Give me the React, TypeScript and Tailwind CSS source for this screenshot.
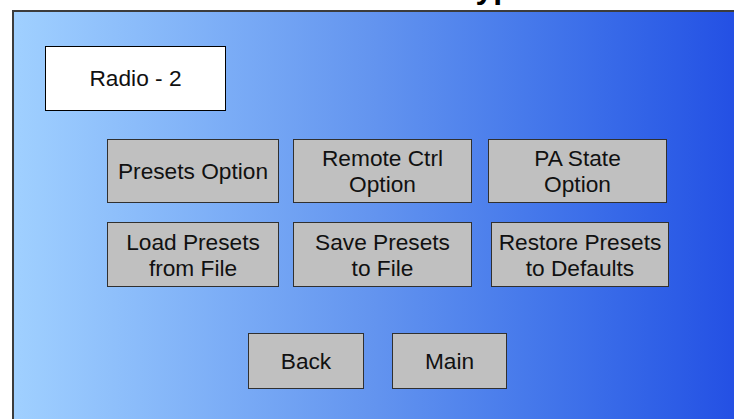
const rowOne = [
  { label: ["Presets Option"], w: "w-[172px]", gap: "" },
  { label: ["Remote Ctrl", "Option"], w: "w-[179px]", gap: "ml-[14px]" },
  { label: ["PA State", "Option"], w: "w-[179px]", gap: "ml-[16px]" },
];

const rowTwo = [
  { label: ["Load Presets", "from File"], w: "w-[172px]", gap: "" },
  { label: ["Save Presets", "to File"], w: "w-[179px]", gap: "ml-[14px]" },
  { label: ["Restore Presets", "to Defaults"], w: "w-[178px]", gap: "ml-[19px]" },
];

function PanelButton({ label, w, gap, h }: { label: string[]; w: string; gap: string; h: string }) {
  return (
    <button
      type="button"
      className={`${w} ${h} ${gap} shrink-0 flex flex-col items-center justify-center bg-[#c0c0c0] border border-[#303030] text-[22.7px] leading-[26px] text-[#111]`}
    >
      {label.map((line) => (
        <span key={line}>{line}</span>
      ))}
    </button>
  );
}

export default function App() {
  return (
    <div
      className="w-[734px] h-[419px] overflow-hidden bg-white flex flex-col"
      style={{ fontFamily: '"Liberation Sans", Arial, sans-serif' }}
    >
      {/* Page title, mostly scrolled out of view */}
      <div className="h-[10px] shrink-0 overflow-hidden relative">
        <div className="absolute left-0 right-0 bottom-[7px] text-center text-[32px] leading-[32px] font-bold text-black pl-[80px]">
          Radio Prototype
        </div>
      </div>

      {/* Screen panel */}
      <div className="flex-1 ml-[12px] border-t-2 border-l-2 border-[#3c3c3c] bg-gradient-to-r from-[#a0d0ff] via-[#6394ef] to-[#2450e4] pl-[31px] pt-[34px]">
        <div className="w-[181px] h-[65px] bg-white border border-black flex items-center justify-center text-[22.7px] text-[#111]">
          Radio - 2
        </div>

        <div className="ml-[62px] mt-[28px] flex">
          {rowOne.map((b) => (
            <PanelButton key={b.label[0]} {...b} h="h-[64px]" />
          ))}
        </div>

        <div className="ml-[62px] mt-[19px] flex">
          {rowTwo.map((b) => (
            <PanelButton key={b.label[0]} {...b} h="h-[65px]" />
          ))}
        </div>

        <div className="ml-[203px] mt-[46px] flex">
          <PanelButton label={["Back"]} w="w-[116px]" gap="" h="h-[56px]" />
          <PanelButton label={["Main"]} w="w-[115px]" gap="ml-[28px]" h="h-[56px]" />
        </div>
      </div>
    </div>
  );
}
